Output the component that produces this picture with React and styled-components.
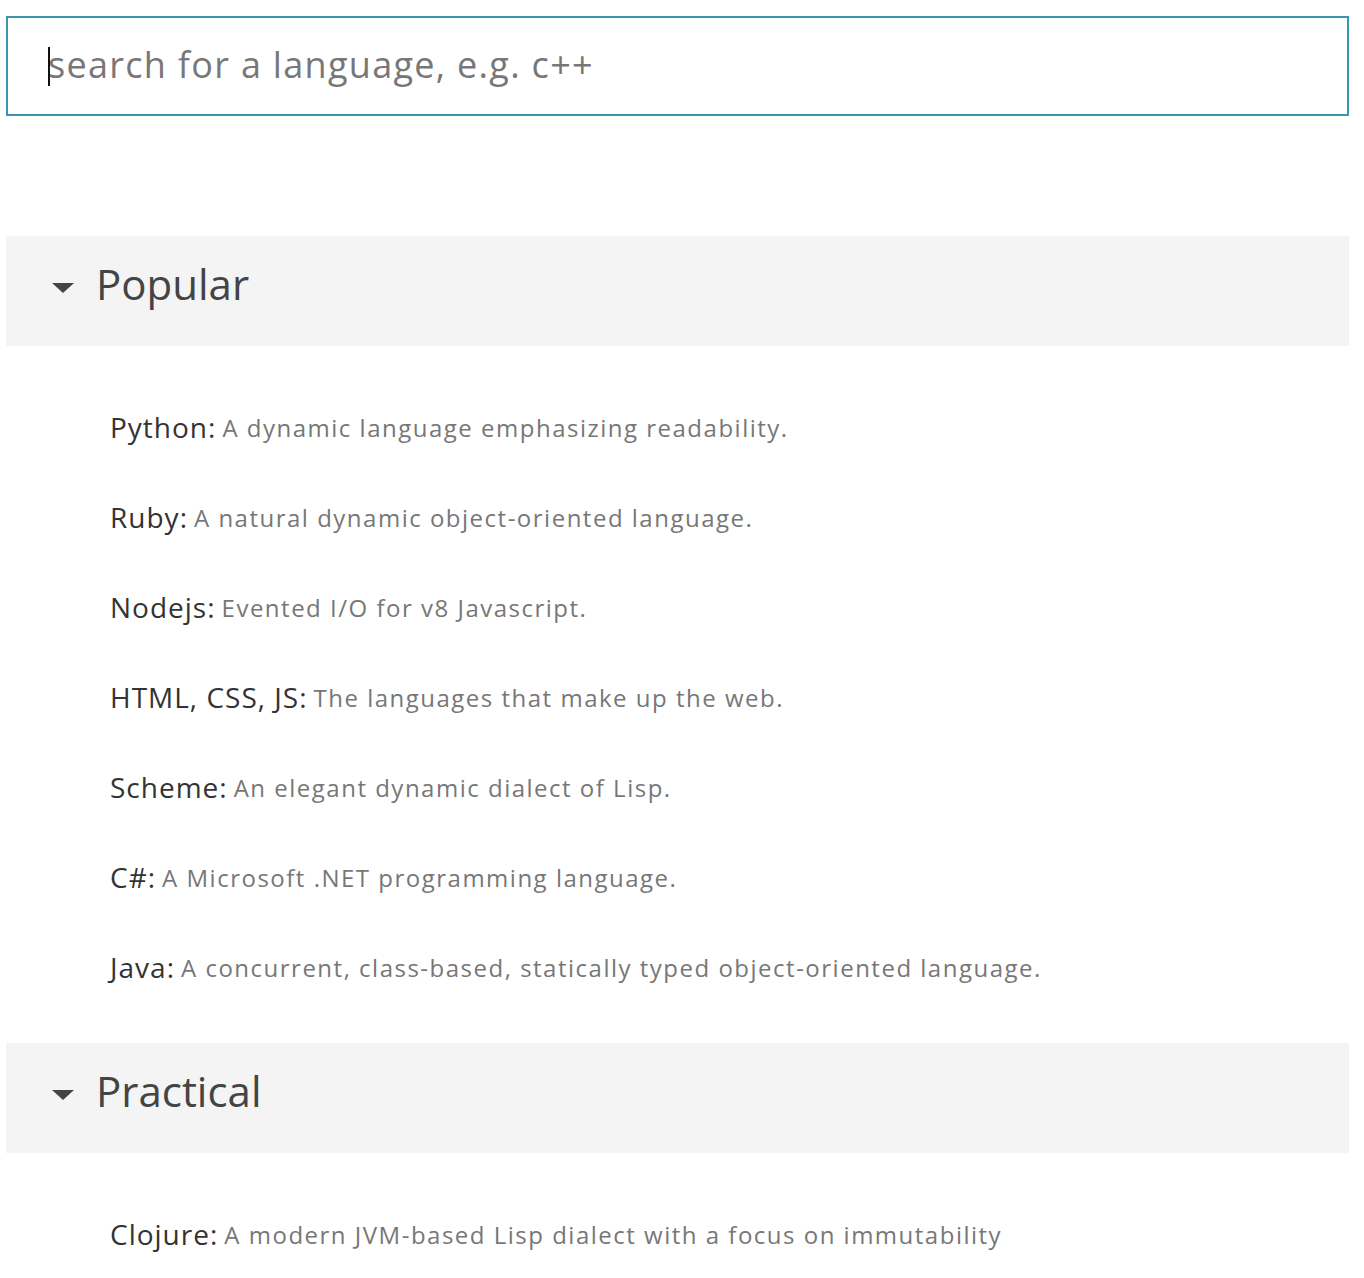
import React from 'react';
import styled, { createGlobalStyle } from 'styled-components';

const GlobalStyle = createGlobalStyle`
  html, body {
    margin: 0;
    padding: 0;
    background: #fff;
  }
  body {
    font-family: "Open Sans", "Liberation Sans", sans-serif;
    color: #444;
  }
`;

const sections = [
  {
    title: 'Popular',
    items: [
      { name: 'Python', desc: 'A dynamic language emphasizing readability.' },
      { name: 'Ruby', desc: 'A natural dynamic object-oriented language.' },
      { name: 'Nodejs', desc: 'Evented I/O for v8 Javascript.' },
      { name: 'HTML, CSS, JS', desc: 'The languages that make up the web.' },
      { name: 'Scheme', desc: 'An elegant dynamic dialect of Lisp.' },
      { name: 'C#', desc: 'A Microsoft .NET programming language.' },
      { name: 'Java', desc: 'A concurrent, class-based, statically typed object-oriented language.' },
    ],
  },
  {
    title: 'Practical',
    items: [
      { name: 'Clojure', desc: 'A modern JVM-based Lisp dialect with a focus on immutability' },
    ],
  },
];

const Page = styled.div`
  padding: 16px 15px 0 6px;
`;

const SearchBox = styled.div`
  position: relative;
`;

const SearchInput = styled.input`
  display: block;
  box-sizing: border-box;
  width: 100%;
  height: 100px;
  padding: 0 0 4px 40px;
  border: 2px solid #3b95b1;
  outline: none;
  font-family: inherit;
  font-size: 36px;
  letter-spacing: 1.3px;
  color: #333;
  caret-color: transparent;

  &::placeholder {
    color: #777;
  }
`;

// static text cursor, as in the focused field of the screenshot
const TextCursor = styled.span`
  position: absolute;
  left: 42px;
  top: 31px;
  width: 2px;
  height: 39px;
  background: #111;
  pointer-events: none;
`;

const Sections = styled.div`
  margin-top: 120px;
`;

const Header = styled.div`
  display: flex;
  align-items: center;
  height: 110px;
  padding-left: 46px;
  background: #f4f4f4;
`;

const Caret = styled.span`
  width: 0;
  height: 0;
  border-left: 11px solid transparent;
  border-right: 11px solid transparent;
  border-top: 10px solid #444;
  margin-right: 22px;
  margin-bottom: 6px;
`;

const Title = styled.h2`
  margin: 0 0 16px;
  font-size: 42px;
  font-weight: 400;
  color: #444;
`;

const List = styled.ul`
  list-style: none;
  margin: 0;
  padding: 36px 0 31px 104px;
`;

const Item = styled.li`
  height: 90px;
  display: flex;
  align-items: center;
`;

const Name = styled.span`
  font-size: 28px;
  letter-spacing: 1px;
  color: #333;
  margin-right: 6px;
`;

const Desc = styled.span`
  font-size: 24px;
  letter-spacing: 1.5px;
  color: #777;
`;

export default function App() {
  return (
    <>
      <GlobalStyle />
      <Page>
        <SearchBox>
          <SearchInput placeholder="search for a language, e.g. c++" autoFocus />
          <TextCursor />
        </SearchBox>
        <Sections>
          {sections.map((s) => (
            <section key={s.title}>
              <Header>
                <Caret />
                <Title>{s.title}</Title>
              </Header>
              <List>
                {s.items.map((it) => (
                  <Item key={it.name}>
                    <Name>{it.name}:</Name>
                    <Desc>{it.desc}</Desc>
                  </Item>
                ))}
              </List>
            </section>
          ))}
        </Sections>
      </Page>
    </>
  );
}
